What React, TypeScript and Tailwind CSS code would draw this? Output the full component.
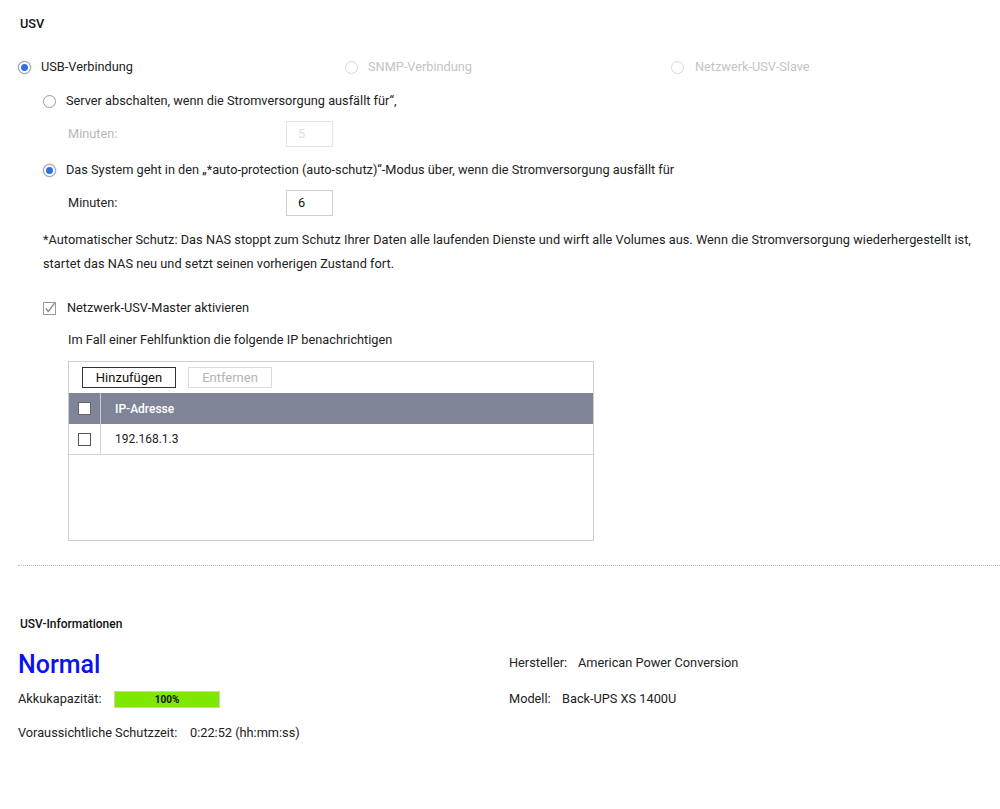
import React from "react";

function Radio({ checked, disabled }: { checked?: boolean; disabled?: boolean }) {
  return (
    <span
      className={`flex h-[13px] w-[13px] shrink-0 items-center justify-center rounded-full border bg-white ${
        disabled ? "border-[#d8d8d8]" : "border-[#9a9a9a]"
      } ${checked ? "shadow-[0_0_2px_#9db8f0]" : ""}`}
    >
      {checked && <span className="h-[7px] w-[7px] rounded-full bg-[#2f6fe6]" />}
    </span>
  );
}

function Box({ white }: { white?: boolean }) {
  return (
    <span
      className={`block h-[13px] w-[13px] border ${
        white ? "border-[#666] bg-white" : "border-[#555] bg-white"
      }`}
    />
  );
}

export default function App() {
  return (
    <div
      className="min-h-[809px] w-[1000px] bg-white text-[12.75px] text-[#333]"
      style={{ fontFamily: "Roboto, 'Liberation Sans', sans-serif" }}
    >
      {/* Section: USV */}
      <div className="flex h-[48px] items-center pl-[20px] font-medium text-[#111]">USV</div>

      <div className="flex h-[38px] items-center pl-[18px]">
        <div className="flex w-[327px] items-center gap-[10px]">
          <Radio checked />
          <span className="text-[#222]">USB-Verbindung</span>
        </div>
        <div className="flex w-[326px] items-center gap-[10px]">
          <Radio disabled />
          <span className="text-[#c4c4c4]">SNMP-Verbindung</span>
        </div>
        <div className="flex items-center gap-[11px]">
          <Radio disabled />
          <span className="text-[#c4c4c4]">Netzwerk-USV-Slave</span>
        </div>
      </div>

      <div className="flex h-[30px] items-center gap-[10px] pl-[43px]">
        <Radio />
        <span className="text-[#222]">Server abschalten, wenn die Stromversorgung ausfällt für“,</span>
      </div>

      <div className="flex h-[36px] items-center pl-[68px]">
        <span className="w-[218px] text-[#b8b8b8]">Minuten:</span>
        <div className="flex h-[26px] w-[47px] items-center border border-[#e4e4e4] pl-[11px] text-[#dcdcdc]">
          5
        </div>
      </div>

      <div className="flex h-[36px] items-center gap-[10px] pl-[43px]">
        <Radio checked />
        <span className="text-[#222]">
          Das System geht in den „*auto-protection (auto-schutz)“-Modus über, wenn die Stromversorgung ausfällt für
        </span>
      </div>

      <div className="flex h-[30px] items-center pl-[68px]">
        <span className="w-[218px] text-[#222]">Minuten:</span>
        <div className="flex h-[26px] w-[47px] items-center border border-[#cfcfcf] pl-[11px] text-[#111]">
          6
        </div>
      </div>

      <div className="mt-[10px] whitespace-nowrap pl-[43px] leading-[24px] tracking-[0.03px] text-[#222]">
        *Automatischer Schutz: Das NAS stoppt zum Schutz Ihrer Daten alle laufenden Dienste und wirft alle Volumes aus. Wenn die Stromversorgung wiederhergestellt ist,
        <br />
        startet das NAS neu und setzt seinen vorherigen Zustand fort.
      </div>

      <div className="mt-[16px] flex h-[32px] items-center gap-[11px] pl-[43px]">
        <svg width="13" height="13" viewBox="0 0 13 13" className="shrink-0">
          <rect x="0.5" y="0.5" width="12" height="12" fill="white" stroke="#9a9a9a" />
          <path d="M2.8 6.6 L5.4 9.4 L11.6 1.2" fill="none" stroke="#8a8a8a" strokeWidth="1.4" />
        </svg>
        <span className="text-[#222]">Netzwerk-USV-Master aktivieren</span>
      </div>

      <div className="flex h-[32px] items-center pl-[68px] text-[#222]">
        Im Fall einer Fehlfunktion die folgende IP benachrichtigen
      </div>

      {/* IP list */}
      <div className="ml-[68px] mt-[5px] flex h-[180px] w-[526px] flex-col border border-[#cfcfcf]">
        <div className="flex h-[31px] items-center gap-[12px] pl-[13px]">
          <button className="h-[21px] w-[94px] border border-[#333] bg-white text-[13px] text-[#111]">
            Hinzufügen
          </button>
          <button className="h-[21px] w-[84px] border border-[#dcdcdc] bg-white text-[13px] text-[#b4b4b4]">
            Entfernen
          </button>
        </div>
        <div className="flex h-[31px] items-center bg-[#7f8596] text-[12px] text-white">
          <div className="flex h-full w-[32px] items-center justify-center border-r border-[#c8ccd4]">
            <Box white />
          </div>
          <span className="pl-[14px] font-medium">IP-Adresse</span>
        </div>
        <div className="flex h-[31px] items-center border-b border-[#d4d4d4] text-[12px] text-[#222]">
          <div className="flex h-full w-[32px] items-center justify-center border-r border-[#d4d4d4]">
            <Box />
          </div>
          <span className="pl-[14px]">192.168.1.3</span>
        </div>
      </div>

      <div className="ml-[18px] mt-[24px] border-t border-dotted border-[#bdbdbd]" />

      {/* Section: USV-Informationen */}
      <div className="mt-[41px] flex h-[34px] items-center pl-[20px] text-[12px] font-medium text-[#111]">
        USV-Informationen
      </div>

      <div className="mt-[6px] flex pl-[18px]">
        <div className="w-[491px]">
          <div className="flex h-[36px] items-center text-[25px] font-medium text-[#0a12f0]">Normal</div>
          <div className="flex h-[32px] items-center">
            <span className="w-[96px] text-[#222]">Akkukapazität:</span>
            <div className="flex h-[17px] w-[106px] items-center justify-center border border-[#cfcfcf] bg-[#7ee800] text-[10px] font-bold text-[#111]">
              100%
            </div>
          </div>
          <div className="flex h-[36px] items-center text-[#222]">
            <span className="w-[172px]">Voraussichtliche Schutzzeit:</span>
            <span>0:22:52 (hh:mm:ss)</span>
          </div>
        </div>
        <div className="text-[#222]">
          <div className="flex h-[32px] items-center">
            <span className="w-[69px]">Hersteller:</span>
            <span>American Power Conversion</span>
          </div>
          <div className="flex h-[40px] items-center">
            <span className="w-[53px]">Modell:</span>
            <span>Back-UPS XS 1400U</span>
          </div>
        </div>
      </div>
    </div>
  );
}
